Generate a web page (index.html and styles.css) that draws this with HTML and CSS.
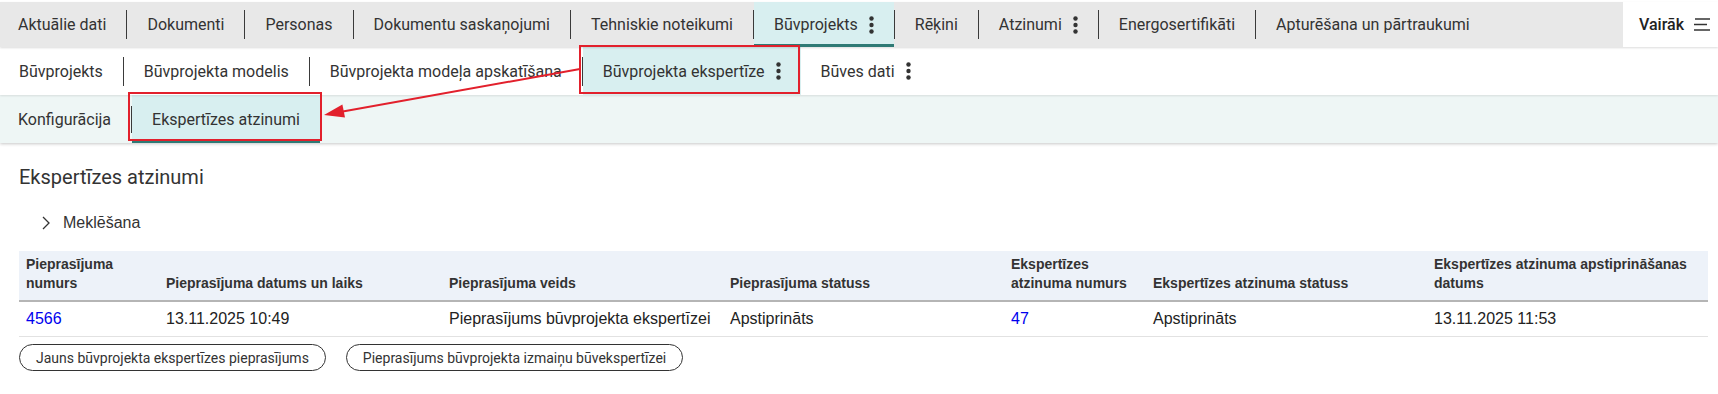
FILE: index.html
```html
<!DOCTYPE html>
<html lang="lv">
<head>
<meta charset="utf-8">
<title>Ekspertīzes atzinumi</title>
<link rel="stylesheet" href="styles.css">
</head>
<body>
<nav class="topnav">
  <div class="tabs">
    <a class="tab first">Aktuālie dati</a><span class="sep"></span>
    <a class="tab">Dokumenti</a><span class="sep"></span>
    <a class="tab">Personas</a><span class="sep"></span>
    <a class="tab">Dokumentu saskaņojumi</a><span class="sep"></span>
    <a class="tab">Tehniskie noteikumi</a><span class="sep"></span>
    <a class="tab active">Būvprojekts<svg class="kebab" viewBox="0 0 5 18"><circle cx="2.5" cy="2.5" r="2.2"/><circle cx="2.5" cy="9" r="2.2"/><circle cx="2.5" cy="15.5" r="2.2"/></svg></a><span class="sep"></span>
    <a class="tab">Rēķini</a><span class="sep"></span>
    <a class="tab">Atzinumi<svg class="kebab" viewBox="0 0 5 18"><circle cx="2.5" cy="2.5" r="2.2"/><circle cx="2.5" cy="9" r="2.2"/><circle cx="2.5" cy="15.5" r="2.2"/></svg></a><span class="sep"></span>
    <a class="tab">Energosertifikāti</a><span class="sep"></span>
    <a class="tab">Apturēšana un pārtraukumi</a>
  </div>
  <div class="more">Vairāk<svg class="burger" viewBox="0 0 16 13"><line x1="1" y1="1" x2="16" y2="1"/><line x1="0" y1="6.5" x2="13" y2="6.5"/><line x1="0" y1="12" x2="16" y2="12"/></svg></div>
</nav>
<nav class="subnav">
  <a class="tab first2">Būvprojekts</a><span class="sep"></span>
  <a class="tab">Būvprojekta modelis</a><span class="sep"></span>
  <a class="tab">Būvprojekta modeļa apskatīšana</a><span class="sep"></span>
  <a class="tab active plain">Būvprojekta ekspertīze<svg class="kebab" viewBox="0 0 5 18"><circle cx="2.5" cy="2.5" r="2.2"/><circle cx="2.5" cy="9" r="2.2"/><circle cx="2.5" cy="15.5" r="2.2"/></svg></a>
  <a class="tab">Būves dati<svg class="kebab" viewBox="0 0 5 18"><circle cx="2.5" cy="2.5" r="2.2"/><circle cx="2.5" cy="9" r="2.2"/><circle cx="2.5" cy="15.5" r="2.2"/></svg></a>
</nav>
<nav class="subnav2">
  <a class="tab first">Konfigurācija</a><span class="sep short"></span>
  <a class="tab active">Ekspertīzes atzinumi</a>
</nav>
<main class="content">
  <h1 class="title">Ekspertīzes atzinumi</h1>
  <div class="search"><svg class="chev" viewBox="0 0 8 14"><polyline points="1,1 7,7 1,13"/></svg>Meklēšana</div>
  <table class="grid">
    <colgroup>
      <col class="c1"><col class="c2"><col class="c3"><col class="c3"><col class="c1b"><col class="c3"><col class="c3">
    </colgroup>
    <thead>
      <tr>
        <th>Pieprasījuma numurs</th>
        <th>Pieprasījuma datums un laiks</th>
        <th>Pieprasījuma veids</th>
        <th>Pieprasījuma statuss</th>
        <th>Ekspertīzes atzinuma numurs</th>
        <th>Ekspertīzes atzinuma statuss</th>
        <th>Ekspertīzes atzinuma apstiprināšanas datums</th>
      </tr>
    </thead>
    <tbody>
      <tr>
        <td><a class="link">4566</a></td>
        <td>13.11.2025 10:49</td>
        <td>Pieprasījums būvprojekta ekspertīzei</td>
        <td>Apstiprināts</td>
        <td><a class="link">47</a></td>
        <td>Apstiprināts</td>
        <td>13.11.2025 11:53</td>
      </tr>
    </tbody>
  </table>
  <div class="actions">
    <button class="btn">Jauns būvprojekta ekspertīzes pieprasījums</button>
    <button class="btn">Pieprasījums būvprojekta izmaiņu būvekspertīzei</button>
  </div>
</main>
<svg class="annot" viewBox="0 0 1718 394" width="1718" height="394">
  <rect x="580" y="46" width="219" height="47"/>
  <rect x="129" y="93" width="192" height="47"/>
  <line x1="580" y1="69" x2="340" y2="112"/>
  <polygon class="head" points="324,115 345,117.6 342.4,104.4"/>
</svg>
</body>
</html>
```
FILE: styles.css
```css
* { box-sizing: border-box; }
html, body { margin: 0; padding: 0; background: #fff; }
body {
  font-family: Roboto, "Noto Sans", sans-serif;
  color: #333;
  width: 1718px;
  height: 394px;
  overflow: hidden;
  position: relative;
}
a { text-decoration: none; }

.topnav {
  display: flex;
  margin-top: 2px;
  height: 45px;
  position: relative;
  z-index: 3;
  box-shadow: 0 1px 2px rgba(0, 0, 0, 0.14);
}
.tabs {
  flex: 1;
  display: flex;
  align-items: center;
  background: #e8e8e8;
}
.tab {
  display: flex;
  align-items: center;
  height: 100%;
  padding: 0 20px;
  font-size: 16px;
  color: #333;
  white-space: nowrap;
}
.tab.first { padding-left: 18px; }
.tab.first2 { padding-left: 19px; }
.sep {
  flex: none;
  width: 1px;
  height: 29px;
  background: #3a3a3a;
}
.sep.short { height: 27px; }
.tab.active {
  background: #d8eff0;
  box-shadow: inset 0 -3px 0 #2f7a75;
}
.tab.active.plain { box-shadow: none; }
.kebab {
  width: 5px;
  height: 18px;
  margin-left: 11px;
  fill: #333;
}
.more {
  flex: none;
  width: 95px;
  display: flex;
  align-items: center;
  padding-left: 16px;
  background: #fff;
  font-size: 16px;
  font-weight: 500;
  color: #222;
}
.burger {
  width: 16px;
  height: 13px;
  margin-left: 10px;
  stroke: #333;
  stroke-width: 1.5;
}

.subnav {
  display: flex;
  align-items: center;
  height: 48px;
  background: #fff;
  position: relative;
  z-index: 2;
  box-shadow: 0 1px 2px rgba(0, 0, 0, 0.10);
}
.subnav2 {
  display: flex;
  align-items: center;
  height: 48px;
  background: #eef6f5;
  position: relative;
  z-index: 1;
  box-shadow: 0 1px 3px rgba(0, 0, 0, 0.22);
}

.content { padding-top: 22px; }
.title {
  margin: 0 0 0 19px;
  font-size: 20px;
  font-weight: 400;
  line-height: 24px;
  color: #333;
}
.search {
  display: flex;
  align-items: center;
  margin: 24px 0 18px 42px;
  font-family: "Liberation Sans", Arial, sans-serif;
  font-size: 16px;
  line-height: 20px;
  color: #333;
}
.chev {
  width: 8px;
  height: 14px;
  margin-right: 13px;
  fill: none;
  stroke: #333;
  stroke-width: 1.3;
}

.grid {
  margin-left: 19px;
  width: 1689px;
  border-collapse: collapse;
  table-layout: fixed;
  font-family: "Liberation Sans", Arial, sans-serif;
}
.c1 { width: 140px; }
.c1b { width: 142px; }
.c2 { width: 283px; }
.c3 { width: 281px; }
.grid th {
  background: #edf2f9;
  font-size: 14px;
  font-weight: bold;
  line-height: 19px;
  text-align: left;
  vertical-align: bottom;
  padding: 4px 7px 7px;
  border-bottom: 2px solid #b5b5b5;
  color: #333;
}
.grid td {
  font-size: 16px;
  line-height: 19px;
  padding: 7px 7px 8px;
  border-bottom: 1px solid #e2e2e2;
  color: #222;
}
.link { color: #0000ee; }

.actions {
  display: flex;
  gap: 20px;
  margin: 7px 0 0 19px;
}
.btn {
  height: 27px;
  padding: 0 16px;
  border: 1px solid #333;
  border-radius: 14px;
  background: #fff;
  font-family: Roboto, sans-serif;
  font-size: 14px;
  color: #333;
}

.annot {
  position: absolute;
  top: 0;
  left: 0;
  pointer-events: none;
  z-index: 10;
  fill: none;
  stroke: #e2202c;
  stroke-width: 2;
}
.annot .head {
  fill: #e2202c;
  stroke: none;
}
```
